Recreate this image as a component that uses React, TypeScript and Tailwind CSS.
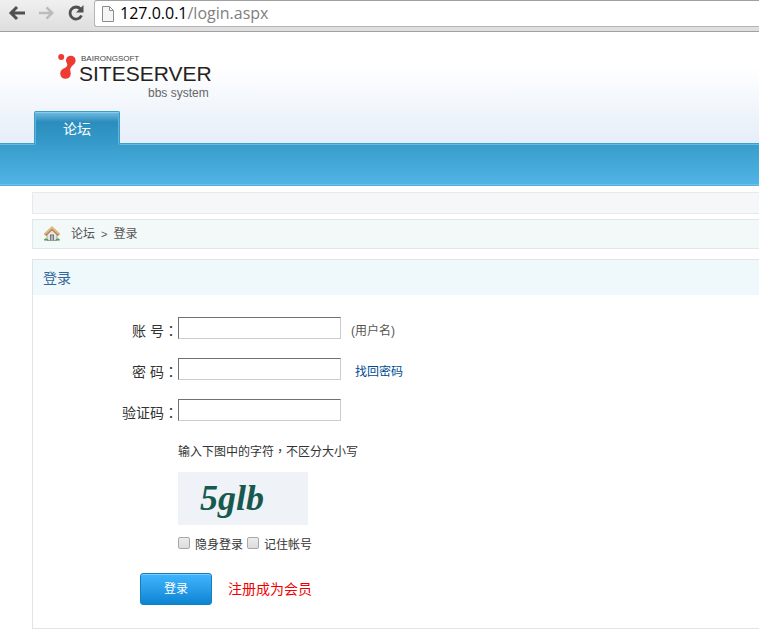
import React from "react";

function BrowserBar() {
  return (
    <div className="flex h-8 border-b border-[#a0a0a0] bg-linear-to-b from-[#f0f0f0] to-[#dedede]">
      <div className="flex w-[94px] shrink-0 items-center gap-3 pb-[5px] pl-2 text-[#505050]">
        <button type="button" aria-label="Back">
          <svg width="18" height="18" viewBox="0 0 18 18" fill="none" stroke="currentColor" strokeWidth="3">
            <path d="M17 9H4M9 3L3 9l6 6" />
          </svg>
        </button>
        <button type="button" aria-label="Forward" className="text-[#bcbcbc]">
          <svg width="17" height="18" viewBox="0 0 18 18" fill="none" stroke="currentColor" strokeWidth="2.8">
            <path d="M1 9h13M9 3l6 6-6 6" />
          </svg>
        </button>
        <button type="button" aria-label="Reload">
          <svg width="18" height="18" viewBox="0 0 18 18" fill="none" stroke="currentColor" strokeWidth="2.8">
            <path d="M13.500 5A6 6 0 1 0 14.500 11.500" />
            <path d="M16.500 1v7.500H9z" fill="currentColor" stroke="none" />
          </svg>
        </button>
      </div>
      <div className="flex h-[27px] flex-1 items-center gap-[6px] rounded-l-[3px] border border-r-0 border-[#b4b4b4] border-t-[#a0a0a0] bg-white pl-[7px]">
        <svg width="12" height="16" viewBox="0 0 12 16" fill="#f5f5f5" stroke="#8c8c8c">
          <path d="M.5.5h7l4 4v11H.5zM7.500.5v4h4" />
        </svg>
        <span className="pb-px font-['Open_Sans','Noto_Sans',sans-serif] text-base leading-6 text-[#808080]">
          <span className="text-black">127.0.0.1</span>/login.aspx
        </span>
      </div>
    </div>
  );
}

function Logo() {
  return (
    <div className="flex w-[152px] gap-[3px]">
      <svg width="18" height="28" viewBox="0 0 18 28" fill="#ee3a32" className="shrink-0">
        <circle cx="3.200" cy="4" r="3" />
        <circle cx="12.800" cy="7.500" r="4.800" />
        <circle cx="7.500" cy="20.500" r="5.300" />
        <path d="M8.800 9.500c1.500 3.500-.3 5-4.800 7l8.500 2c-1-3 .5-4.500 4-8z" />
      </svg>
      <div className="flex flex-1 flex-col items-start font-['Liberation_Sans',Arial,sans-serif]">
        <span className="pl-[2px] text-[8px] leading-[11px] text-[#444]">BAIRONGSOFT</span>
        <span className="text-[21px] leading-5 text-[#26221c]">SITESERVER</span>
        <span className="pl-[69px] text-xs leading-[18px] whitespace-nowrap text-[#666]">bbs system</span>
      </div>
    </div>
  );
}

function HomeIcon() {
  return (
    <svg width="16" height="16" viewBox="0 0 16 16">
      <path d="M3 8l5-5 5 5v6.500H3z" fill="#e6e6e6" stroke="#a5a5a5" />
      <path d="M6 8.500h4v6H6z" fill="#777" />
      <path d="M7 9.500h2v5H7z" fill="#b5b5b5" />
      <path d="M1 9l7-6.500L15 9" fill="none" stroke="#ad7f49" strokeWidth="3" />
      <path d="M1 8l7-6.500L15 8" fill="none" stroke="#e2b77d" strokeWidth="2" />
      <path d="M0 14.500c0-2 2-3 5 0zM11 14.500c2-3 5-2 5 0z" fill="#4fa045" />
    </svg>
  );
}

/* Traditional glyphs keep full-width punctuation centred in its cell. */
function Mark({ children }: { children: string }) {
  return <span className="font-['Noto_Sans_CJK_TC',sans-serif] leading-none">{children}</span>;
}

function Field({ id, label, type, children }: { id: string; label: string; type: string; children?: React.ReactNode }) {
  return (
    <div className="flex h-[41px] items-start">
      <label htmlFor={id} className="w-[145px] pt-1 text-right text-sm leading-5 text-[#333]">
        {label}
        <Mark>：</Mark>
      </label>
      <input
        id={id}
        type={type}
        className="h-[22px] w-[163px] border border-[#ccc] border-t-[#707070] border-l-[#707070] bg-white px-1 text-xs outline-none"
      />
      {children}
    </div>
  );
}

function Check({ label }: { label: string }) {
  return (
    <label className="flex items-center gap-[5px]">
      <input
        type="checkbox"
        className="mb-1 size-3 appearance-none rounded-xs border border-[#a8a8a8] bg-linear-to-b from-[#ececec] to-[#dcdcdc] checked:bg-[#555]"
      />
      {label}
    </label>
  );
}

export default function App() {
  return (
    <div className="bg-white font-['Liberation_Sans','Noto_Sans_CJK_SC',sans-serif] text-xs text-[#333]">
      <BrowserBar />
      <header>
        <div className="flex h-[111px] flex-col items-start justify-between bg-linear-to-b from-white from-30% to-[#e6eef8] pt-[21px] pl-[34px]">
          <div className="pl-6">
            <Logo />
          </div>
          <a
            href="#forum"
            className="z-10 -mb-[2px] flex h-[34px] w-[86px] items-center justify-center rounded-t-xs border border-b-0 border-[#3d9bc8] bg-linear-to-b from-[#70bde3] via-[#2b8dbd] via-30% to-[#369bca] text-sm text-white shadow-[inset_0_1px_0_#8accec,inset_1px_0_0_#5fb2da,inset_-1px_0_0_#5fb2da]"
          >
            论坛
          </a>
        </div>
        <nav className="h-[43px] border-t border-b border-t-[#3c9fcd] border-b-[#54b0df] bg-linear-to-b from-[#389ccb] to-[#50b5e6] shadow-[inset_0_1px_0_#68bbe0,inset_0_-1px_0_#70c0e8]" />
      </header>
      <main className="pt-[6px] pl-8">
        <div className="h-[22px] border border-r-0 border-[#e7e9eb] bg-[#f5f7f9]" />
        <div className="mt-[5px] flex h-[30px] items-center border border-r-0 border-[#e2e8ea] bg-[#f3f8f9] pl-[11px] text-[#555]">
          <HomeIcon />
          <a href="#forum" className="ml-[11px]">
            论坛
          </a>
          <span className="mx-[6px] text-[11px]">&gt;</span>
          <span>登录</span>
        </div>
        <section className="mt-[10px] border border-r-0 border-[#dde5e8]">
          <h1 className="h-[35px] bg-[#eff8fb] pl-[10px] text-sm leading-9 text-[#336699]">登录</h1>
          <form className="pt-[22px] pb-[23px]">
            <Field id="account" label="账 号" type="text">
              <span className="ml-[10px] pt-1 leading-5 text-[#555]">(用户名)</span>
            </Field>
            <Field id="password" label="密 码" type="password">
              <a href="#password" className="ml-[14px] pt-1 leading-5 text-[#004b91]">
                找回密码
              </a>
            </Field>
            <Field id="code" label="验证码" type="text" />
            <div className="pt-[2px] pl-[145px]">
              <p className="leading-5">
                输入下图中的字符<Mark>，</Mark>不区分大小写
              </p>
              <div className="mt-[10px] h-[53px] w-[130px] bg-[#eff3f8] pl-[22px] font-['Liberation_Serif',serif] text-4xl leading-[52px] font-bold text-[#17594f] italic">
                5glb
              </div>
              <div className="mt-[10px] flex gap-1 leading-5">
                <Check label="隐身登录" />
                <Check label="记住帐号" />
              </div>
            </div>
            <div className="mt-[18px] flex items-center gap-4 pl-[107px]">
              <button
                type="submit"
                className="h-8 w-[72px] rounded-[3px] border border-[#1480bd] bg-linear-to-b from-[#3fb5ff] to-[#0885d2] text-xs text-white shadow-[inset_0_1px_0_#7acbff]"
              >
                登录
              </button>
              <a href="#register" className="text-sm text-[#f00000]">
                注册成为会员
              </a>
            </div>
          </form>
        </section>
      </main>
    </div>
  );
}
